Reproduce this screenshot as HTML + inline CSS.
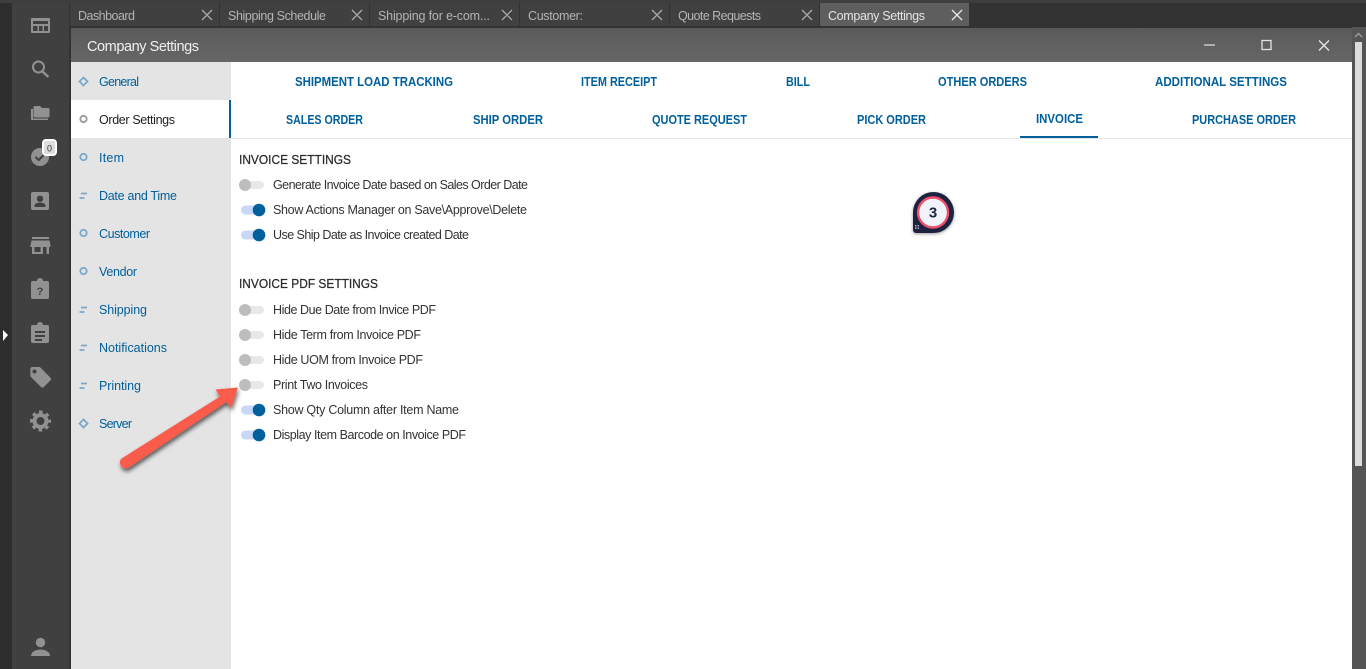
<!DOCTYPE html>
<html lang="en"><head><meta charset="utf-8"><title>Company Settings</title>
<style>
html,body{margin:0;padding:0;width:1366px;height:669px;overflow:hidden;background:#333}
svg{display:block}
text{font-family:"Liberation Sans",sans-serif;font-size:12px}
.tab{fill:#b4b4b4;font-size:12.500px}
.nav{fill:#00609c;font-size:12.500px}
.top{fill:#00609c;font-size:12.500px;font-weight:bold}
.row{fill:#333;font-size:12.500px}
.h{fill:#2b2b2b;font-size:13px;stroke:#2b2b2b;stroke-width:.25px}
.x{stroke:#aaa;stroke-width:1.3;fill:none}
.i{fill:#919191}
.mk{fill:none;stroke-width:1.8}
</style></head><body>
<svg width="1366" height="669" viewBox="0 0 1366 669" xmlns="http://www.w3.org/2000/svg">
<defs>
<linearGradient id="tb" x1="0" y1="0" x2="0" y2="1"><stop offset="0" stop-color="#5a5a5a"/><stop offset="1" stop-color="#666"/></linearGradient>
<filter id="sh" x="-20%" y="-20%" width="140%" height="150%"><feDropShadow dx="1" dy="3" stdDeviation="2" flood-color="#000" flood-opacity=".6"/></filter>
<filter id="sh2" x="-30%" y="-30%" width="160%" height="160%"><feDropShadow dx="0" dy="1" stdDeviation="1.5" flood-color="#000" flood-opacity=".4"/></filter>
</defs>
<rect width="1366" height="669" fill="#333"/>
<rect width="1366" height="3" fill="#3e3e3e"/>
<rect x="0" y="3" width="12" height="666" fill="#2d2d2d"/>
<rect x="12" y="3" width="57" height="666" fill="#404040"/>
<rect x="69" y="3" width="2" height="666" fill="#333"/>
<path d="M3 330l5 5-5 6z" fill="#fff"/>

<!-- tabs -->
<g fill="#404040">
<rect x="70" y="3" width="149" height="23"/><rect x="220" y="3" width="149" height="23"/><rect x="370" y="3" width="149" height="23"/><rect x="520" y="3" width="149" height="23"/><rect x="670" y="3" width="149" height="23"/>
</g>
<rect x="820" y="3" width="149" height="23" fill="#5e5e5e"/>
<text class="tab" x="78" y="20" textLength="57" lengthAdjust="spacing">Dashboard</text>
<text class="tab" x="228" y="20" textLength="98" lengthAdjust="spacing">Shipping Schedule</text>
<text class="tab" x="378" y="20" textLength="112" lengthAdjust="spacing">Shipping for e-com...</text>
<text class="tab" x="528" y="20" textLength="55" lengthAdjust="spacing">Customer:</text>
<text class="tab" x="678" y="20" textLength="83" lengthAdjust="spacing">Quote Requests</text>
<text class="tab" x="828" y="20" textLength="97" lengthAdjust="spacing" style="fill:#e4e4e4">Company Settings</text>
<path class="x" d="M202 10l10 10m0-10l-10 10M352 10l10 10m0-10l-10 10M502 10l10 10m0-10l-10 10M652 10l10 10m0-10l-10 10M802 10l10 10m0-10l-10 10"/>
<path class="x" style="stroke:#e8e8e8" d="M952 10l10 10m0-10l-10 10"/>

<!-- window -->
<rect x="71" y="28" width="1281" height="34" fill="url(#tb)"/>
<text x="87" y="51" textLength="112" lengthAdjust="spacing" style="font-size:14.500px;fill:#f0f0f0">Company Settings</text>
<rect x="1204" y="44" width="11" height="2" fill="#b0b0b0"/>
<rect x="1262" y="40.500" width="9" height="9" fill="none" stroke="#e4e4e4" stroke-width="1.3"/>
<path d="M1319 40.500l10 10m0-10l-10 10" fill="none" stroke="#e8e8e8" stroke-width="1.3"/>
<rect x="1352" y="27" width="14" height="642" fill="#555"/>
<path d="M1355 37l3.500-3.500 3.500 3.500" fill="none" stroke="#999" stroke-width="1.500"/>
<rect x="1355" y="42" width="7" height="424" fill="#dcdcdc"/>

<rect x="71" y="62" width="160" height="607" fill="#e4e4e4"/>
<rect x="231" y="62" width="1121" height="607" fill="#fff"/>
<rect x="71" y="100" width="160" height="38" fill="#fff"/>
<rect x="229" y="100" width="2" height="38" fill="#00609c"/>
<rect x="231" y="138" width="1121" height="1" fill="#e8e8e8"/>

<!-- nav markers -->
<g class="mk" stroke="#7aa9c8">
<path d="M83.500 77.500l4 4-4 4-4-4z"/>
<circle cx="83.500" cy="157" r="3.200"/>
<path d="M81 193.500h6M79.500 198h5"/>
<circle cx="83.500" cy="233" r="3.200"/>
<circle cx="83.500" cy="271" r="3.200"/>
<path d="M81 307.500h6M79.500 312h5"/>
<path d="M81 345.500h6M79.500 350h5"/>
<path d="M81 383.500h6M79.500 388h5"/>
<path d="M83.500 419.500l4 4-4 4-4-4z"/>
</g>
<circle cx="83.500" cy="119" r="3.200" fill="none" stroke="#999" stroke-width="1.800"/>

<text class="nav" x="99" y="86" textLength="40" lengthAdjust="spacing">General</text>
<text class="nav" x="99" y="124" textLength="76" lengthAdjust="spacing" style="fill:#222">Order Settings</text>
<text class="nav" x="99" y="162" textLength="25" lengthAdjust="spacing">Item</text>
<text class="nav" x="99" y="200" textLength="78" lengthAdjust="spacing">Date and Time</text>
<text class="nav" x="99" y="238" textLength="51" lengthAdjust="spacing">Customer</text>
<text class="nav" x="99" y="276" textLength="38" lengthAdjust="spacing">Vendor</text>
<text class="nav" x="99" y="314" textLength="48" lengthAdjust="spacing">Shipping</text>
<text class="nav" x="99" y="352" textLength="68" lengthAdjust="spacing">Notifications</text>
<text class="nav" x="99" y="390" textLength="42" lengthAdjust="spacing">Printing</text>
<text class="nav" x="99" y="428" textLength="33" lengthAdjust="spacing">Server</text>

<!-- top tabs -->
<text class="top" x="295" y="86" textLength="158" lengthAdjust="spacingAndGlyphs">SHIPMENT LOAD TRACKING</text>
<text class="top" x="581" y="86" textLength="76" lengthAdjust="spacingAndGlyphs">ITEM RECEIPT</text>
<text class="top" x="786" y="86" textLength="24" lengthAdjust="spacingAndGlyphs">BILL</text>
<text class="top" x="938" y="86" textLength="89" lengthAdjust="spacingAndGlyphs">OTHER ORDERS</text>
<text class="top" x="1155" y="86" textLength="132" lengthAdjust="spacingAndGlyphs">ADDITIONAL SETTINGS</text>
<text class="top" x="286" y="124" textLength="77" lengthAdjust="spacingAndGlyphs">SALES ORDER</text>
<text class="top" x="473" y="124" textLength="70" lengthAdjust="spacingAndGlyphs">SHIP ORDER</text>
<text class="top" x="652" y="124" textLength="95" lengthAdjust="spacingAndGlyphs">QUOTE REQUEST</text>
<text class="top" x="857" y="124" textLength="69" lengthAdjust="spacingAndGlyphs">PICK ORDER</text>
<text class="top" x="1036" y="123" textLength="47" lengthAdjust="spacingAndGlyphs">INVOICE</text>
<text class="top" x="1192" y="124" textLength="104" lengthAdjust="spacingAndGlyphs">PURCHASE ORDER</text>
<rect x="1020" y="136" width="78" height="2" fill="#00609c"/>

<!-- settings -->
<text class="h" x="239" y="164" textLength="112" lengthAdjust="spacingAndGlyphs">INVOICE SETTINGS</text>
<text class="h" x="239" y="288" textLength="139" lengthAdjust="spacingAndGlyphs">INVOICE PDF SETTINGS</text>
<text class="row" x="273" y="189" textLength="255" lengthAdjust="spacing">Generate Invoice Date based on Sales Order Date</text>
<text class="row" x="273" y="214" textLength="254" lengthAdjust="spacing">Show Actions Manager on Save\Approve\Delete</text>
<text class="row" x="273" y="239" textLength="196" lengthAdjust="spacing">Use Ship Date as Invoice created Date</text>
<text class="row" x="273" y="314" textLength="163" lengthAdjust="spacing">Hide Due Date from Invice PDF</text>
<text class="row" x="273" y="339" textLength="148" lengthAdjust="spacing">Hide Term from Invoice PDF</text>
<text class="row" x="273" y="364" textLength="150" lengthAdjust="spacing">Hide UOM from Invoice PDF</text>
<text class="row" x="273" y="389" textLength="95" lengthAdjust="spacing">Print Two Invoices</text>
<text class="row" x="273" y="414" textLength="186" lengthAdjust="spacing">Show Qty Column after Item Name</text>
<text class="row" x="273" y="439" textLength="193" lengthAdjust="spacing">Display Item Barcode on Invoice PDF</text>

<!-- toggles -->
<g fill="#e8e8e8">
<rect x="240" y="181" width="24" height="8" rx="4"/><rect x="240" y="306" width="24" height="8" rx="4"/><rect x="240" y="331" width="24" height="8" rx="4"/><rect x="240" y="356" width="24" height="8" rx="4"/><rect x="240" y="381" width="24" height="8" rx="4"/>
</g>
<g fill="#bdbdbd">
<circle cx="245" cy="185" r="6"/><circle cx="245" cy="310" r="6"/><circle cx="245" cy="335" r="6"/><circle cx="245" cy="360" r="6"/><circle cx="245" cy="385" r="6"/>
</g>
<g fill="#c8d7f7">
<rect x="241" y="205.500" width="23" height="9" rx="4.500"/><rect x="241" y="230.500" width="23" height="9" rx="4.500"/><rect x="241" y="405.500" width="23" height="9" rx="4.500"/><rect x="241" y="430.500" width="23" height="9" rx="4.500"/>
</g>
<g fill="#00609c">
<circle cx="259" cy="210" r="6.300"/><circle cx="259" cy="235" r="6.300"/><circle cx="259" cy="410" r="6.300"/><circle cx="259" cy="435" r="6.300"/>
</g>

<!-- arrow -->
<g filter="url(#sh)">
<path d="M121.500 458.500L220 396.500 215.500 389.500 238 387.500 231 408 226.500 402 129 467.500Q124.500 470 121 466 118.500 461.500 121.500 458.500Z" fill="#fa5c4c"/>
</g>

<!-- marker -->
<g filter="url(#sh2)">
<path d="M933.500 192a20.500 20.500 0 0 1 0 41H916a3 3 0 0 1-3-3V212.500a20.500 20.500 0 0 1 20.500-20.500z" fill="#1c2340"/>
<circle cx="933" cy="212.500" r="15" fill="#f1f3fb" stroke="#ee4f68" stroke-width="2.400"/>
</g>
<text x="933" y="217.500" text-anchor="middle" style="font-size:15px;font-weight:bold;fill:#1c2340">3</text>
<g fill="#aab"><rect x="915" y="225" width="1.500" height="1.500"/><rect x="917.500" y="225" width="1.500" height="1.500"/><rect x="915" y="227.500" width="1.500" height="1.500"/><rect x="917.500" y="227.500" width="1.500" height="1.500"/></g>

<!-- sidebar icons -->
<path class="i" fill-rule="evenodd" d="M32 18h17a1 1 0 0 1 1 1v13a1 1 0 0 1-1 1H32a1 1 0 0 1-1-1V19a1 1 0 0 1 1-1zm1 3v3h15v-3zm0 5v5h4.500v-5zm6 0v5h3.500v-5zm5 0v5H48v-5z"/>
<circle cx="38.500" cy="67" r="5.500" fill="none" stroke="#919191" stroke-width="2"/><path d="M42.500 71.500l6 5.500" stroke="#919191" stroke-width="2.400" fill="none"/>
<path class="i" d="M31 109v10a1 1 0 0 0 1 1h16v-1.500H33V109zM35 106h5l2 2h6a1.500 1.500 0 0 1 1.500 1.500v6.500a1.500 1.500 0 0 1-1.500 1.500H35a1.500 1.500 0 0 1-1.500-1.500v-8.500A1.500 1.500 0 0 1 35 106z"/>
<circle cx="40" cy="157" r="9" fill="#919191"/><path d="M35.500 157l3.200 3 6-6" fill="none" stroke="#404040" stroke-width="2"/>
<rect x="43" y="140" width="13" height="15" rx="3" fill="#ddd" stroke="#fff" stroke-width="2"/>
<text x="49.500" y="151.500" text-anchor="middle" style="font-size:9px;fill:#333">0</text>
<path class="i" fill-rule="evenodd" d="M33 192h14a2 2 0 0 1 2 2v14a2 2 0 0 1-2 2H33a2 2 0 0 1-2-2v-14a2 2 0 0 1 2-2zm7 3.500a3.200 3.200 0 1 0 0 6.400 3.200 3.200 0 0 0 0-6.400zM34.500 207h11v-1.500c0-2-3.500-3-5.500-3s-5.500 1-5.500 3z"/>
<path class="i" fill-rule="evenodd" d="M32 237h17v2H32zM31.500 240.500h18l1 4.500v2H49v7H32v-7h-1.500v-2zM34.500 247v5h6v-5zM43 247v7h3.500v-7z"/>
<path class="i" d="M33 281h4a3 3 0 0 1 6 0h4a2 2 0 0 1 2 2v14a2 2 0 0 1-2 2H33a2 2 0 0 1-2-2v-14a2 2 0 0 1 2-2z"/>
<text x="40" y="295" text-anchor="middle" style="font-size:11px;font-weight:bold;fill:#404040">?</text>
<path class="i" fill-rule="evenodd" d="M33 325h4a3 3 0 0 1 6 0h4a2 2 0 0 1 2 2v14a2 2 0 0 1-2 2H33a2 2 0 0 1-2-2v-14a2 2 0 0 1 2-2zm2 6v2h10v-2zm0 4v2h10v-2zm0 4v2h7v-2z"/>
<path class="i" fill-rule="evenodd" d="M32 367h7a2 2 0 0 1 1.500.6l9.900 10a2 2 0 0 1 0 2.800l-6.600 6.600a2 2 0 0 1-2.800 0l-10-9.900a2 2 0 0 1-.6-1.500V369a2 2 0 0 1 1.600-2zm2.500 2.500a2 2 0 1 0 0 4 2 2 0 0 0 0-4z"/>
<circle cx="40.500" cy="421" r="6" fill="none" stroke="#919191" stroke-width="4"/>
<circle cx="40.500" cy="421" r="9" fill="none" stroke="#919191" stroke-width="3" stroke-dasharray="3.500 3.570" stroke-dashoffset="1.750"/>
<circle cx="40.500" cy="642.500" r="4.700" fill="#919191"/><path class="i" d="M31 656c0-4 4.500-6.500 9.500-6.500s9.500 2.500 9.500 6.500z"/>
</svg>
</body></html>
